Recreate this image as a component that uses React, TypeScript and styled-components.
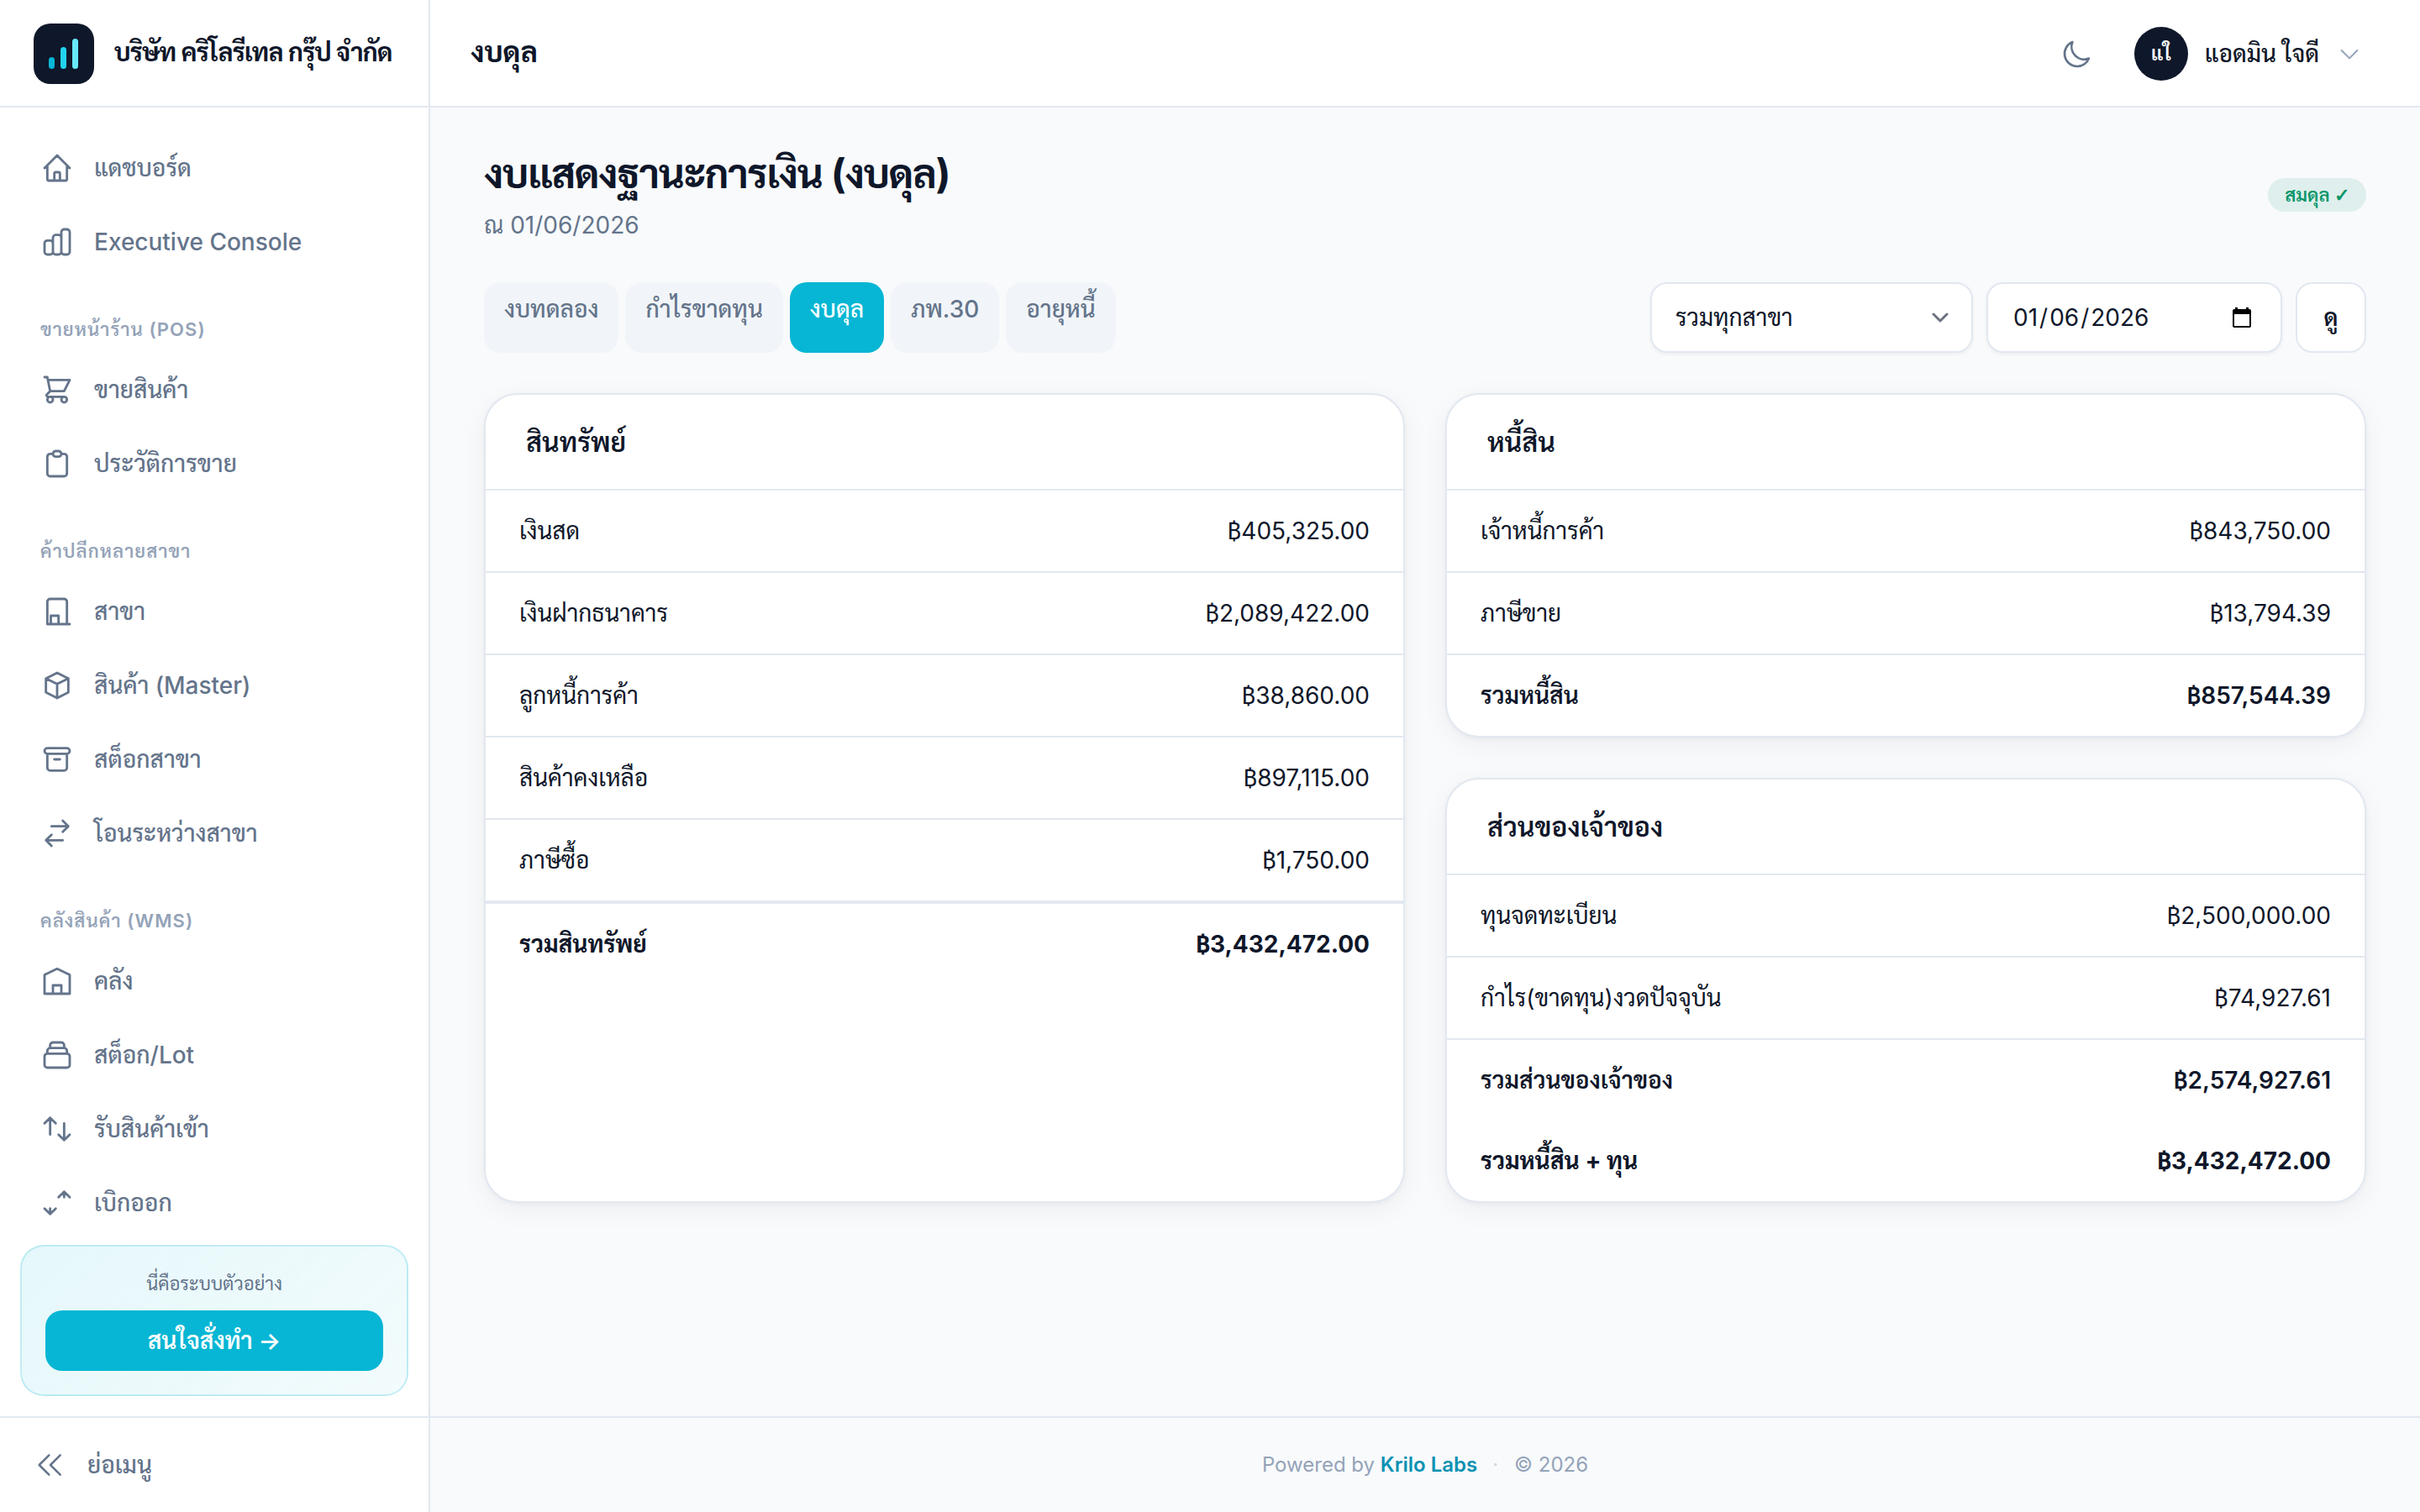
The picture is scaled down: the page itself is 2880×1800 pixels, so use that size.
import React from "react";
import styled, { createGlobalStyle } from "styled-components";

const fontStack = `Inter, Sarabun, "Noto Sans", sans-serif`;

const GlobalStyle = createGlobalStyle`
  *, *::before, *::after {
    box-sizing: border-box;
  }
  body {
    margin: 0;
    font-family: ${fontStack};
    font-size: 28px;
    line-height: 40px;
    color: #0f172a;
    background: #f8fafc;
  }
  button {
    font: inherit;
    color: inherit;
    border: none;
    background: none;
    padding: 0;
  }
`;

const Shell = styled.div`
  display: flex;
  width: 2880px;
  height: 1800px;
  overflow: hidden;
`;

const Sidebar = styled.aside`
  display: flex;
  flex-direction: column;
  flex: none;
  width: 512px;
  background: #fff;
  border-right: 2px solid #e2e8f0;
`;

const Brand = styled.div`
  display: flex;
  align-items: center;
  gap: 24px;
  flex: none;
  height: 128px;
  padding: 2px 40px 0;
  border-bottom: 2px solid #e2e8f0;
`;

const BrandName = styled.span`
  margin-bottom: 5px;
  font-size: 30px;
  font-weight: 700;
  letter-spacing: -0.025em;
  white-space: nowrap;
`;

const Nav = styled.nav`
  flex: 1;
  min-height: 0;
  overflow: hidden;
  padding: 28px 24px 0;
`;

const NavGroup = styled.div`
  height: 64px;
  margin-top: 24px;
  padding: 20px 24px 0;
  color: #94a3b8;
  font-size: 22px;
  font-weight: 600;
  line-height: 32px;
  letter-spacing: 0.05em;
`;

const NavItem = styled.a`
  display: flex;
  align-items: center;
  gap: 24px;
  height: 88px;
  padding: 0 24px;
  color: #64748b;
  font-weight: 500;
  white-space: nowrap;
`;

const PromoBox = styled.div`
  flex: none;
  height: 180px;
  margin: 0 24px 24px;
  padding: 28px;
  border: 2px solid rgba(6, 182, 212, 0.2);
  border-radius: 28px;
  background: linear-gradient(135deg, rgba(6, 182, 212, 0.1), rgba(6, 182, 212, 0.05));
  text-align: center;
`;

const PromoText = styled.p`
  margin: 0 0 16px;
  color: #64748b;
  font-size: 22px;
  line-height: 32px;
`;

const PromoButton = styled.button`
  width: 100%;
  height: 72px;
  border-radius: 20px;
  background: #06b6d4;
  color: #fff;
  font-weight: 600;
`;

const CollapseButton = styled.button`
  display: flex;
  align-items: center;
  gap: 24px;
  flex: none;
  height: 114px;
  padding: 0 40px;
  border-top: 2px solid #e2e8f0;
  color: #64748b;
  font-weight: 500;
`;

const Main = styled.div`
  display: flex;
  flex-direction: column;
  flex: 1;
  min-width: 0;
`;

const TopBar = styled.header`
  display: flex;
  align-items: center;
  justify-content: space-between;
  flex: none;
  height: 128px;
  padding: 2px 68px 0 48px;
  background: #fff;
  border-bottom: 2px solid #e2e8f0;
`;

const TopTitle = styled.h1`
  margin: 0 0 4px;
  font-size: 34px;
  font-weight: 700;
`;

const TopActions = styled.div`
  display: flex;
  align-items: center;
  gap: 20px;
  color: #64748b;
`;

const Avatar = styled.span`
  display: flex;
  align-items: center;
  justify-content: center;
  width: 64px;
  height: 64px;
  margin-left: 28px;
  border-radius: 50%;
  background: #0f172a;
  color: #fff;
  font-size: 24px;
  font-weight: 600;
`;

const UserName = styled.span`
  color: #0f172a;
  font-weight: 500;
`;

const Content = styled.main`
  display: flex;
  flex-direction: column;
  gap: 48px;
  flex: 1;
  padding: 48px 64px;
`;

const PageHead = styled.div`
  display: flex;
  align-items: center;
  justify-content: space-between;
`;

const PageTitle = styled.h2`
  margin: 0 0 10px;
  font-size: 48px;
  font-weight: 700;
  line-height: 62px;
  letter-spacing: -0.025em;
`;

const PageDate = styled.p`
  margin: 0;
  color: #64748b;
`;

const Badge = styled.span`
  height: 40px;
  padding: 0 20px;
  border-radius: 20px;
  background: rgba(5, 150, 105, 0.1);
  color: #059669;
  font-size: 22px;
  font-weight: 600;
`;

const Toolbar = styled.div`
  display: flex;
  justify-content: space-between;
  height: 84px;
`;

const Tabs = styled.div`
  display: flex;
  gap: 8px;
`;

const Tab = styled.a<{ $active?: boolean }>`
  padding: 12px 24px;
  border-radius: 20px;
  background: ${(p) => (p.$active ? "#06b6d4" : "#f1f5f9")};
  color: ${(p) => (p.$active ? "#fff" : "#64748b")};
  font-weight: 500;
`;

const Filters = styled.div`
  display: flex;
  gap: 16px;
`;

const Field = styled.div<{ $width: number }>`
  display: flex;
  align-items: center;
  justify-content: space-between;
  width: ${(p) => p.$width}px;
  padding: 0 27px 0 28px;
  border: 2px solid #e2e8f0;
  border-radius: 20px;
  background: #fff;
  box-shadow: 0 2px 4px rgba(15, 23, 42, 0.05);
`;

const DatePart = styled.span`
  padding: 0 2px;
`;

const CalendarIcon = styled.svg`
  margin-right: 8px;
`;

const ViewButton = styled.button`
  width: 84px;
  border: 2px solid #e2e8f0;
  border-radius: 20px;
  background: #fff;
  font-weight: 600;
`;

const Columns = styled.div`
  display: grid;
  grid-template-columns: 1fr 1fr;
  gap: 48px;
`;

const Stack = styled.div`
  display: flex;
  flex-direction: column;
  gap: 48px;
`;

const Card = styled.section`
  border: 2px solid #e2e8f0;
  border-radius: 40px;
  background: #fff;
  box-shadow: 0 2px 6px rgba(15, 23, 42, 0.04), 0 8px 32px rgba(15, 23, 42, 0.05);
`;

const CardTitle = styled.h3`
  height: 114px;
  margin: 0;
  padding: 37px 48px 0;
  border-bottom: 2px solid #e2e8f0;
  font-size: 32px;
  font-weight: 600;
`;

const Row = styled.div`
  display: flex;
  justify-content: space-between;
  height: 98px;
  padding: 28px 40px;
  border-bottom: 2px solid #e2e8f0;
`;

const TotalRow = styled(Row)<{ $ruled?: boolean; $grand?: boolean }>`
  height: ${(p) => (p.$ruled ? 98 : 96)}px;
  border-top: ${(p) => (p.$ruled ? "2px solid #e2e8f0" : "none")};
  border-bottom: none;
  font-weight: ${(p) => (p.$grand ? 700 : 600)};
`;

// ฿ and ✓ come from the Thai face, zero line-height keeps the row baseline
const ThaiSymbol = styled.span`
  font-family: Sarabun, sans-serif;
  line-height: 0;
`;

const Footer = styled.footer`
  display: flex;
  align-items: center;
  justify-content: center;
  flex: none;
  height: 114px;
  border-top: 2px solid #e2e8f0;
  color: #94a3b8;
  font-size: 24px;
  white-space: pre;
`;

const FooterBrand = styled.span`
  color: #0891b2;
  font-weight: 600;
`;

const Dot = styled.span`
  margin: 0 19px 0 18px;
  color: #cbd5e1;
`;

const IconSvg = styled.svg`
  flex: none;
`;

interface IconProps {
  d: string;
  size?: number;
  weight?: number;
  color?: string;
}

const Icon = ({ d, size = 40, weight = 1.5, color = "currentColor" }: IconProps) => (
  <IconSvg width={size} height={size} viewBox="0 0 24 24" fill="none" stroke={color} strokeWidth={weight} strokeLinecap="round" strokeLinejoin="round">
    <path d={d} />
  </IconSvg>
);

const icons = {
  home: "M3 12l2-2m0 0l7-7 7 7M5 10v10a1 1 0 001 1h3m10-11l2 2m-2-2v10a1 1 0 01-1 1h-3m-6 0a1 1 0 001-1v-4a1 1 0 011-1h2a1 1 0 011 1v4a1 1 0 001 1m-6 0h6",
  chart: "M9 19v-6a2 2 0 00-2-2H5a2 2 0 00-2 2v6a2 2 0 002 2h2a2 2 0 002-2zm0 0V9a2 2 0 012-2h2a2 2 0 012 2v10m-6 0a2 2 0 002 2h2a2 2 0 002-2m0 0V5a2 2 0 012-2h2a2 2 0 012 2v14a2 2 0 01-2 2h-2a2 2 0 01-2-2z",
  cart: "M3 3h2l.4 2M7 13h10l4-8H5.4M7 13L5.4 5M7 13l-2.293 2.293c-.63.63-.184 1.707.707 1.707H17m0 0a2 2 0 100 4 2 2 0 000-4zm-8 2a2 2 0 11-4 0 2 2 0 014 0z",
  clipboard: "M9 5H7a2 2 0 00-2 2v12a2 2 0 002 2h10a2 2 0 002-2V7a2 2 0 00-2-2h-2M9 5a2 2 0 002 2h2a2 2 0 002-2M9 5a2 2 0 012-2h2a2 2 0 012 2",
  branch: "M19 21V5a2 2 0 00-2-2H7a2 2 0 00-2 2v16h16M7.5 21v-6h5.5v6",
  cube: "M20 7l-8-4-8 4m16 0l-8 4m8-4v10l-8 4m0-10L4 7m8 4v10M4 7v10l8 4",
  archive: "M5 8h14M5 8a2 2 0 110-4h14a2 2 0 110 4M5 8v10a2 2 0 002 2h10a2 2 0 002-2V8m-9 4h4",
  transfer: "M8 7h12m0 0l-4-4m4 4l-4 4m0 6H4m0 0l4 4m-4-4l4-4",
  warehouse: "M3 21V7.5l9-4.3 9 4.3V21H3zM9 21v-6h6v6",
  stock: "M19 11H5m14 0a2 2 0 012 2v6a2 2 0 01-2 2H5a2 2 0 01-2-2v-6a2 2 0 012-2m14 0V9a2 2 0 00-2-2M5 11V9a2 2 0 012-2m0 0V5a2 2 0 012-2h6a2 2 0 012 2v2M7 7h10",
  receive: "M7 16V4m0 0L3 8m4-4l4 4m6 0v12m0 0l4-4m-4 4l-4-4",
  issue: "M17 8V4m0 0l4 4m-4-4l-4 4M7 16v4m0 0l4-4m-4 4l-4-4",
  collapse: "M11 19l-7-7 7-7m8 14l-7-7 7-7",
  moon: "M20.354 15.354A9 9 0 018.646 3.646 9.003 9.003 0 0012 21a9.003 9.003 0 008.354-5.646z",
  chevron: "M19 9l-7 7-7-7",
};

interface NavSection {
  title?: string;
  items: [keyof typeof icons, string][];
}

const sections: NavSection[] = [
  { items: [["home", "แดชบอร์ด"], ["chart", "Executive Console"]] },
  { title: "ขายหน้าร้าน (POS)", items: [["cart", "ขายสินค้า"], ["clipboard", "ประวัติการขาย"]] },
  {
    title: "ค้าปลีกหลายสาขา",
    items: [["branch", "สาขา"], ["cube", "สินค้า (Master)"], ["archive", "สต็อกสาขา"], ["transfer", "โอนระหว่างสาขา"]],
  },
  {
    title: "คลังสินค้า (WMS)",
    items: [["warehouse", "คลัง"], ["stock", "สต็อก/Lot"], ["receive", "รับสินค้าเข้า"], ["issue", "เบิกออก"]],
  },
];

const tabs = ["งบทดลอง", "กำไรขาดทุน", "งบดุล", "ภพ.30", "อายุหนี้"];

// label, amount in baht
type Line = [string, string];

const assets: Line[] = [
  ["เงินสด", "405,325.00"],
  ["เงินฝากธนาคาร", "2,089,422.00"],
  ["ลูกหนี้การค้า", "38,860.00"],
  ["สินค้าคงเหลือ", "897,115.00"],
  ["ภาษีซื้อ", "1,750.00"],
];

const liabilities: Line[] = [
  ["เจ้าหนี้การค้า", "843,750.00"],
  ["ภาษีขาย", "13,794.39"],
];

const equity: Line[] = [
  ["ทุนจดทะเบียน", "2,500,000.00"],
  ["กำไร(ขาดทุน)งวดปัจจุบัน", "74,927.61"],
];

interface StatementProps {
  title: string;
  lines: Line[];
  subtotal?: Line;
  total?: Line;
  ruled?: boolean;
}

const LineCells = ({ line: [label, amount] }: { line: Line }) => (
  <>
    <span>{label}</span>
    <span>
      <ThaiSymbol>฿</ThaiSymbol>
      {amount}
    </span>
  </>
);

const Statement = ({ title, lines, subtotal, total, ruled }: StatementProps) => (
  <Card>
    <CardTitle>{title}</CardTitle>
    {lines.map((line) => (
      <Row key={line[0]}>
        <LineCells line={line} />
      </Row>
    ))}
    {subtotal && (
      <TotalRow>
        <LineCells line={subtotal} />
      </TotalRow>
    )}
    {total && (
      <TotalRow $grand $ruled={ruled}>
        <LineCells line={total} />
      </TotalRow>
    )}
  </Card>
);

const Logo = () => (
  <IconSvg width="72" height="72" viewBox="0 0 72 72">
    <rect width="72" height="72" rx="20" fill="#0f172a" />
    <rect x="18" y="40" width="7" height="14" rx="3.5" fill="#06b6d4" />
    <rect x="32" y="28" width="7" height="26" rx="3.5" fill="#22d3ee" />
    <rect x="46" y="18" width="7" height="36" rx="3.5" fill="#67e8f9" />
  </IconSvg>
);

const App = (): React.ReactElement => {
  return (
    <>
      <GlobalStyle />
      <Shell>
        <Sidebar>
          <Brand>
            <Logo />
            <BrandName>บริษัท คริโลรีเทล กรุ๊ป จำกัด</BrandName>
          </Brand>
          <Nav>
            {sections.map((section, i) => (
              <React.Fragment key={i}>
                {section.title && <NavGroup>{section.title}</NavGroup>}
                {section.items.map(([icon, label]) => (
                  <NavItem key={label}>
                    <Icon d={icons[icon]} weight={1.7} />
                    {label}
                  </NavItem>
                ))}
              </React.Fragment>
            ))}
          </Nav>
          <PromoBox>
            <PromoText>นี่คือระบบตัวอย่าง</PromoText>
            <PromoButton>สนใจสั่งทำ →</PromoButton>
          </PromoBox>
          <CollapseButton>
            <Icon d={icons.collapse} />
            ย่อเมนู
          </CollapseButton>
        </Sidebar>
        <Main>
          <TopBar>
            <TopTitle>งบดุล</TopTitle>
            <TopActions>
              <Icon d={icons.moon} weight={1.6} />
              <Avatar>แใ</Avatar>
              <UserName>แอดมิน ใจดี</UserName>
              <Icon d={icons.chevron} size={32} color="#94a3b8" />
            </TopActions>
          </TopBar>
          <Content>
            <PageHead>
              <div>
                <PageTitle>งบแสดงฐานะการเงิน (งบดุล)</PageTitle>
                <PageDate>ณ 01/06/2026</PageDate>
              </div>
              <Badge>
                สมดุล <ThaiSymbol>✓</ThaiSymbol>
              </Badge>
            </PageHead>
            <Toolbar>
              <Tabs>
                {tabs.map((tab) => (
                  <Tab key={tab} $active={tab === "งบดุล"}>
                    {tab}
                  </Tab>
                ))}
              </Tabs>
              <Filters>
                <Field $width={384}>
                  รวมทุกสาขา
                  <svg width="20" height="12" viewBox="0 0 20 12" fill="none" stroke="#6b7280" strokeWidth="3" strokeLinecap="round" strokeLinejoin="round">
                    <path d="M2 2l8 8 8-8" />
                  </svg>
                </Field>
                <Field $width={352}>
                  <span>
                    <DatePart>01</DatePart>/<DatePart>06</DatePart>/<DatePart>2026</DatePart>
                  </span>
                  <CalendarIcon width="22" height="24" viewBox="0 0 22 24">
                    <path fillRule="evenodd" d="M3 0h3v2h10V0h3v2h1a2 2 0 012 2v18a2 2 0 01-2 2H2a2 2 0 01-2-2V4a2 2 0 012-2h1zM2 8v14h18V8z" />
                  </CalendarIcon>
                </Field>
                <ViewButton>ดู</ViewButton>
              </Filters>
            </Toolbar>
            <Columns>
              <Statement title="สินทรัพย์" lines={assets} total={["รวมสินทรัพย์", "3,432,472.00"]} ruled />
              <Stack>
                <Statement title="หนี้สิน" lines={liabilities} subtotal={["รวมหนี้สิน", "857,544.39"]} />
                <Statement
                  title="ส่วนของเจ้าของ"
                  lines={equity}
                  subtotal={["รวมส่วนของเจ้าของ", "2,574,927.61"]}
                  total={["รวมหนี้สิน + ทุน", "3,432,472.00"]}
                />
              </Stack>
            </Columns>
          </Content>
          <Footer>
            Powered by <FooterBrand>Krilo Labs</FooterBrand>
            <Dot>·</Dot>© 2026
          </Footer>
        </Main>
      </Shell>
    </>
  );
};

export default App;
